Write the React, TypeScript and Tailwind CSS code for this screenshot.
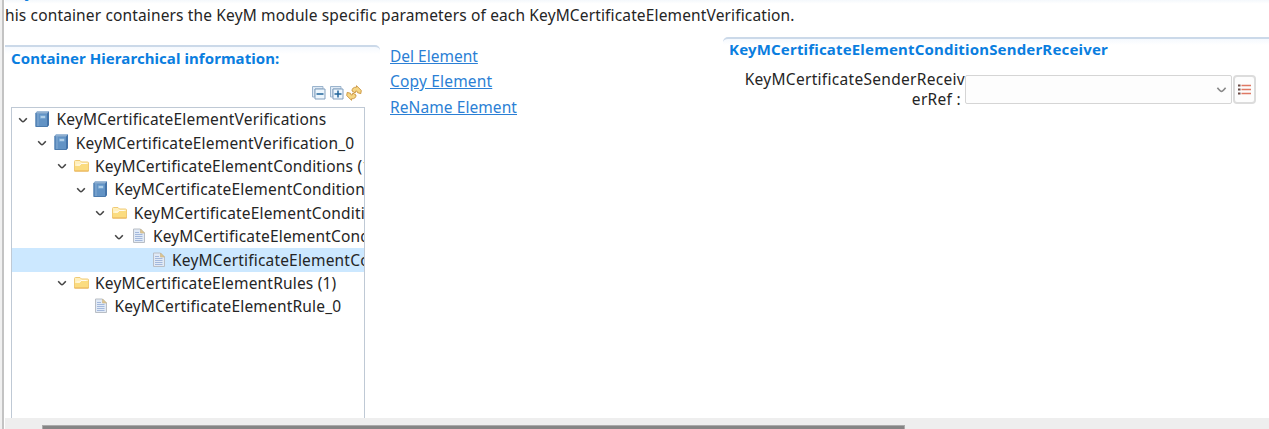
type IconKind = "book" | "folder" | "page";

type Row = { label: string; kind: IconKind; indent: string; open: boolean; selected?: boolean };

const rows: Row[] = [
  { label: "KeyMCertificateElementVerifications", kind: "book", indent: "pl-[5px]", open: true },
  { label: "KeyMCertificateElementVerification_0", kind: "book", indent: "pl-[24.3px]", open: true },
  { label: "KeyMCertificateElementConditions (1)", kind: "folder", indent: "pl-[43.6px]", open: true },
  { label: "KeyMCertificateElementCondition_0", kind: "book", indent: "pl-[62.9px]", open: true },
  { label: "KeyMCertificateElementConditionValue", kind: "folder", indent: "pl-[82.2px]", open: true },
  { label: "KeyMCertificateElementConditionValue", kind: "page", indent: "pl-[101.4px]", open: true },
  { label: "KeyMCertificateElementConditionSenderReceiver", kind: "page", indent: "pl-[120.6px]", open: false, selected: true },
  { label: "KeyMCertificateElementRules (1)", kind: "folder", indent: "pl-[43.6px]", open: true },
  { label: "KeyMCertificateElementRule_0", kind: "page", indent: "pl-[62.9px]", open: false },
];

function Chevron({ className }: { className: string }) {
  return (
    <svg className={className} viewBox="0 0 12 12" fill="none" stroke="currentColor" strokeWidth="1.5">
      <path d="M2.2 4.3Q5 7.7 6 7.7T9.8 4.3" />
    </svg>
  );
}

function TreeIcon({ kind }: { kind: IconKind }) {
  if (kind === "book") {
    return (
      <svg className="-mt-[2px] h-[18px] w-[18px] shrink-0" viewBox="0 0 18 18">
        <path d="M3 1.5h12v13.5l-1.5 2H1.5V3z" fill="#6293c5" />
        <path d="M3 1.5h12l-1.5 2h-12z" fill="#8fafd0" />
        <path d="M13 3.5l2-2V15l-2 2z" fill="#4473a8" />
        <path d="M2 3v13.5h11" fill="none" stroke="#4c7bad" />
        <path d="M4 3.5V16" stroke="#86acd2" />
        <path d="M6 5.5h5.5v3H6z" fill="#86b3db" />
        <path d="M7 7h4" stroke="#d9ebf7" />
      </svg>
    );
  }
  if (kind === "folder") {
    return (
      <svg className="h-[18px] w-[18px] shrink-0" viewBox="0 0 18 18">
        <path d="M1.5 14V4.5q0-1 1-1H7L8.5 5h6q1 0 1 1v8z" fill="#fff0bd" stroke="#f0ca75" />
        <path d="M2 14V9h4.5L8 7h7v7z" fill="#fbdc80" />
        <path d="M3.5 8H7l1-1.5h5.5" fill="none" stroke="#fffaf0" />
        <path d="M1.5 14h14" stroke="#e8ae52" />
      </svg>
    );
  }
  return (
    <svg className="-mt-px h-[18px] w-[18px] shrink-0" viewBox="0 0 18 18">
      <path d="M3.5 2h7l4 4v9.5h-11z" fill="#e1eaf6" stroke="#b9bec5" />
      <path d="M10.5 2v4h4z" fill="#e0c68d" stroke="#c7b489" strokeWidth=".6" />
      <path d="M5 5.5h4M5 7.5h7.5M5 9.5h7.5M5 11.5h7.5M5 13.5h7.5" stroke="#a3b8dc" />
    </svg>
  );
}

function FoldIcon({ plus }: { plus?: boolean }) {
  return (
    <svg className="h-4 w-4" viewBox="0 0 16 16" fill="none">
      <path d="M1.5 12V1.5H12V4H4v8z" fill="#dfeaf5" stroke="#9bb4cd" />
      <path d="M4 4h10v10H4z" fill="#edf6fd" stroke="#829fbd" />
      <path d={plus ? "M5.5 9h7M9 5.5v7" : "M5.5 9h7"} stroke="#20649a" strokeWidth="1.5" />
    </svg>
  );
}

function SyncIcon() {
  return (
    <svg className="-ml-px h-4 w-4" viewBox="0 0 16 16" fill="#f6d683" stroke="#c8923c" strokeWidth=".9" strokeLinejoin="round">
      <path d="M6 6Q6 2 10.5 2.2V.7l4.8 4.7-.5 3.2-3.3-.9-.7-1.7Q9 5.5 9.2 8z" />
      <path d="M10 10Q10 14 5.5 13.8v1.5L.7 10.6l.5-3.2 3.3.9.7 1.7Q7 10.5 6.8 8z" />
    </svg>
  );
}

export default function App() {
  return (
    <div className="flex h-[429px] w-[1269px] overflow-hidden bg-white font-['Noto_Sans','Open_Sans',sans-serif] text-[15.5px] leading-[20px] text-[#252525]">
      <div className="w-[4px] shrink-0 border-r-2 border-[#c3c3c3] bg-[#f0f0f0]" />
      <div className="flex w-[1265px] flex-col pl-px">
        <div className="flex h-[37px] shrink-0 flex-col overflow-hidden bg-linear-to-b from-[#f4f8fc] from-0% to-white to-10%">
          <div className="flex h-[5px] items-end overflow-hidden pb-[3px] pl-[1px] text-[15px] leading-[20px] font-bold text-[#0a7edf]">Key</div>
          <p className="tracking-[0.14px] whitespace-nowrap">his container containers the KeyM module specific parameters of each KeyMCertificateElementVerification.</p>
        </div>

        <div className="flex min-h-0 flex-1">
          <section className="mt-[8px] flex w-[375px] shrink-0 flex-col">
            <div className="h-[9px] shrink-0 rounded-tr-[5px] border-t-2 border-[#cbd9e9] bg-linear-to-b from-[#f5f9fe] to-white" />
            <h2 className="-mt-[6px] h-[20px] pl-[6px] text-[15px] font-bold tracking-[0.07px] whitespace-nowrap text-[#0a7edf]">Container Hierarchical information:</h2>
            <div className="mt-[16px] flex h-[18px] items-center gap-[2px] pl-[306px]">
              <FoldIcon />
              <FoldIcon plus />
              <SyncIcon />
            </div>
            <div className="mt-[5px] ml-[6px] w-[354px] flex-1 overflow-hidden border-x border-t border-[#bfc9d5]">
              {rows.map((row, i) => (
                <div key={i} className={`flex h-[23.4px] items-center ${row.indent} ${row.selected ? "bg-[#cce8ff]" : ""}`}>
                  {row.open ? <Chevron className="mr-[5px] h-3 w-3 shrink-0 text-[#444]" /> : <span className="w-[17px] shrink-0" />}
                  <TreeIcon kind={row.kind} />
                  <span className="-mt-px ml-[4.5px] tracking-[0.18px] whitespace-nowrap">{row.label}</span>
                </div>
              ))}
            </div>
          </section>

          <nav className="mt-[9px] ml-[10px] flex w-[333px] shrink-0 flex-col items-start text-[#2b7fd5]">
            <a className="h-[25.4px] underline">Del Element</a>
            <a className="h-[25.4px] tracking-[0.18px] underline">Copy Element</a>
            <a className="h-[25.4px] tracking-[0.08px] underline">ReName Element</a>
          </nav>

          <section className="flex w-[546px] shrink-0 flex-col">
            <div className="h-[8px] rounded-tl-[5px] border-t-2 border-[#cbd9e9] bg-linear-to-b from-[#f5f9fe] to-white" />
            <h2 className="-mt-[6px] h-[20px] pl-[6px] text-[15px] font-bold tracking-[0.18px] whitespace-nowrap text-[#0a7edf]">KeyMCertificateElementConditionSenderReceiver</h2>
            <div className="mt-[10px] flex items-start">
              <label className="w-[242px] text-right tracking-[0.3px] whitespace-nowrap">
                KeyMCertificateSenderReceiv
                <br />
                <span className="pr-[4px]">erRef :</span>
              </label>
              <div className="mt-[6px] flex h-[29px] w-[267px] items-center justify-end rounded-[2px] border border-[#d5d5d5] bg-[#fdfdfd] pr-[3px]">
                <Chevron className="h-[13px] w-[13px] text-[#888]" />
              </div>
              <button className="mt-[6px] ml-px flex h-[29px] w-[23px] items-center justify-center rounded-[4px] border-2 border-[#dcdcdc] bg-[#fdfdfd]">
                <svg className="h-[13px] w-[13px] shrink-0" viewBox="0 0 13 13">
                  <path d="M0 2.5h2.5M0 6.5h2.5M0 10.5h2.5" stroke="#6b4b46" strokeWidth="2" />
                  <path d="M3.5 2.5H13M3.5 6.5H13M3.5 10.5H13" stroke="#df7964" strokeWidth="1.3" />
                </svg>
              </button>
            </div>
          </section>
        </div>

        <div className="flex h-[11px] shrink-0 items-end bg-[#eeeeee] pl-[37px]">
          <div className="h-[4px] w-[863px] border-x border-t border-[#aaa] bg-[#858585]" />
        </div>
      </div>
    </div>
  );
}
